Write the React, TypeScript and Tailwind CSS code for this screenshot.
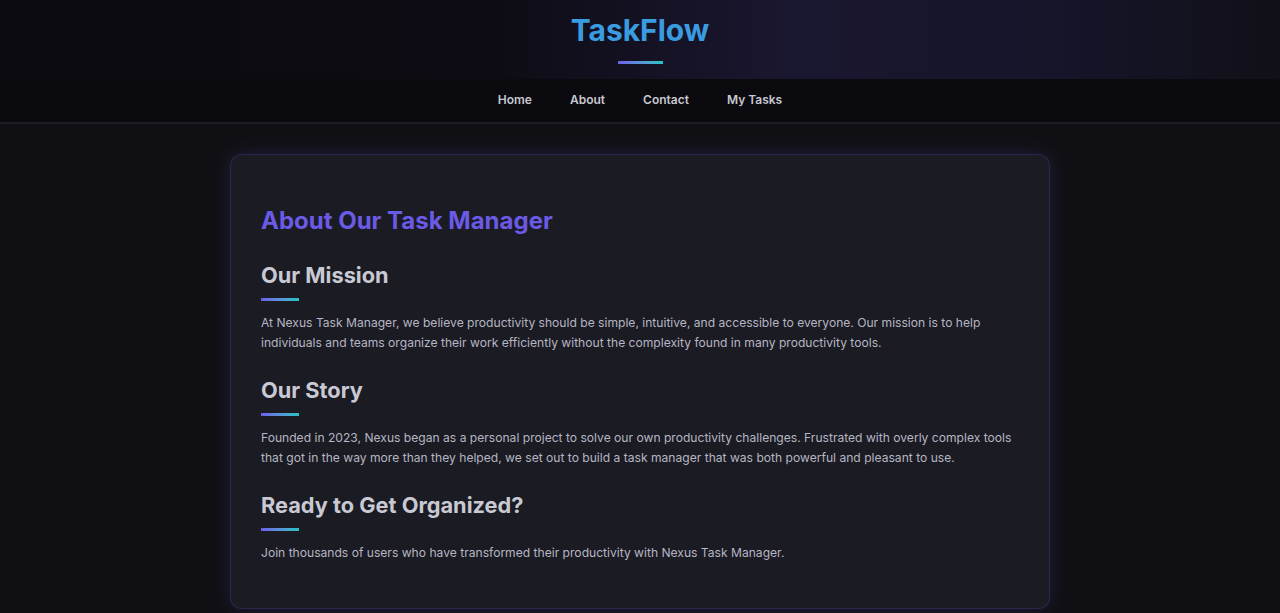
import React from "react";

// セクションのデータ
type Section = {
  title: string;
  body: string;
};

const sections: Section[] = [
  {
    title: "Our Mission",
    body: "At Nexus Task Manager, we believe productivity should be simple, intuitive, and accessible to everyone. Our mission is to help individuals and teams organize their work efficiently without the complexity found in many productivity tools.",
  },
  {
    title: "Our Story",
    body: "Founded in 2023, Nexus began as a personal project to solve our own productivity challenges. Frustrated with overly complex tools that got in the way more than they helped, we set out to build a task manager that was both powerful and pleasant to use.",
  },
  {
    title: "Ready to Get Organized?",
    body: "Join thousands of users who have transformed their productivity with Nexus Task Manager.",
  },
];

const navLinks = ["Home", "About", "Contact", "My Tasks"];

export default function App() {
  return (
    <div
      className="min-h-screen bg-[#101014] text-[#c9c9d3]"
      style={{ fontFamily: "Inter, 'Noto Sans', sans-serif" }}
    >
      <header className="h-[79px] flex flex-col items-center bg-[linear-gradient(90deg,#0b0b10_0%,#0d0c14_38%,#1a1730_62%,#16152a_82%,#111018_100%)]">
        <h1 className="mt-[12px] text-[30px] leading-[36px] font-bold text-[#3a9be0]">TaskFlow</h1>
        <div className="mt-[13px] w-[45px] h-[3px] bg-gradient-to-r from-[#6c5ce7] to-[#1fc3c4]" />
      </header>

      <nav className="h-[45px] pb-[2px] bg-[#0b0a0f] border-b-2 border-[#1c1c22] flex items-center justify-center gap-[38px]">
        {navLinks.map((l) => (
          <a key={l} className="text-[12px] font-semibold text-[#c8c8d0]">
            {l}
          </a>
        ))}
      </nav>

      <main className="pt-[30px] pb-[5px]">
        <div className="w-[820px] mx-auto rounded-[12px] bg-[#1b1b24] border border-[#6c5ce7]/20 shadow-[0_0_18px_rgba(108,92,231,0.18)] px-[30px] pt-[50px] pb-[45px]">
          <h2 className="text-[24px] leading-[32px] font-bold text-[#6a5ae6]">About Our Task Manager</h2>

          {sections.map((s, i) => (
            <section key={s.title} className={i === 0 ? "mt-[24px]" : "mt-[23px]"}>
              <h3 className="text-[21.75px] leading-[28px] font-bold text-[#c9c9d3]">{s.title}</h3>
              <div className="mt-[9px] w-[38px] h-[3px] bg-gradient-to-r from-[#6c5ce7] to-[#1fc3c4]" />
              <p className="mt-[12px] text-[12.1px] leading-[20px] text-[#b6b6c2]">{s.body}</p>
            </section>
          ))}
        </div>
      </main>
    </div>
  );
}
